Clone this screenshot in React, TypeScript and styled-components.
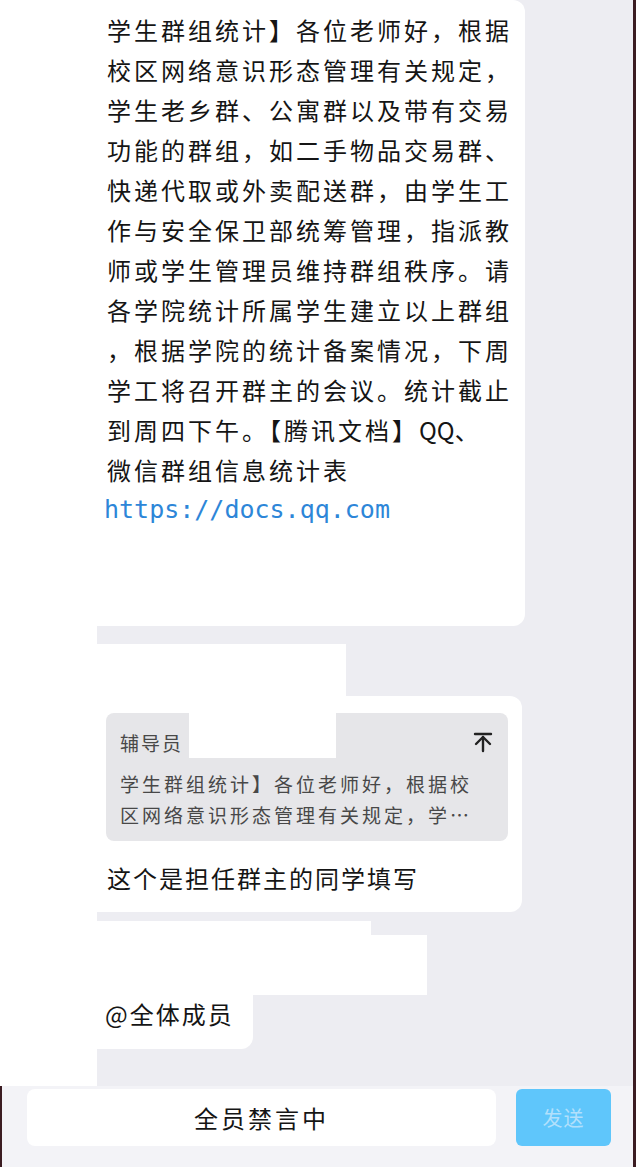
import React from "react";
import styled, { createGlobalStyle } from "styled-components";

const GlobalStyle = createGlobalStyle`
  html, body {
    margin: 0;
    padding: 0;
    background: #ffffff;
  }
  body {
    font-family: "Noto Sans CJK SC", "Noto Sans", sans-serif;
    color: #151515;
  }
`;

const Screen = styled.div`
  width: 636px;
  height: 1167px;
  box-sizing: border-box;
  display: flex;
  flex-direction: column;
  overflow: hidden;
  border-right: 3px solid #3b1c22;
  box-shadow: inset -1px 0 #f7eff1;
`;

// chat area: white avatar gutter + grey timeline
const ChatArea = styled.div`
  flex: 0 0 1086px;
  display: grid;
  grid-template-columns: 97px 1fr;
`;

const Gutter = styled.div`
  background: #ffffff;
`;

const Timeline = styled.div`
  background: #ededf2;
  display: flex;
  flex-direction: column;
  align-items: flex-start;
  overflow: hidden;
`;

const Bubble = styled.div<{ $width: number; $radius?: string }>`
  width: ${({ $width }) => $width}px;
  box-sizing: border-box;
  background: #ffffff;
  border-radius: ${({ $radius }) => $radius || "0 12px 12px 0"};
`;

const LongBubble = styled(Bubble)`
  padding: 10px 10px 96px 10px;
`;

const Line = styled.div`
  font-size: 24px;
  line-height: 40px;
  letter-spacing: 3px;
  white-space: nowrap;
`;

const Latin = styled.span`
  letter-spacing: 0;
`;

const Link = styled.div`
  font-family: "DejaVu Sans Mono", "Liberation Mono", monospace;
  font-size: 25px;
  line-height: 40px;
  color: #2d86d8;
  margin-left: -3px;
  white-space: nowrap;
`;

const Redaction = styled.div<{ $width: number; $height: number; $top?: number }>`
  width: ${({ $width }) => $width}px;
  height: ${({ $height }) => $height}px;
  margin-top: ${({ $top }) => $top || 0}px;
  background: #ffffff;
`;

const ReplyBubble = styled(Bubble)`
  padding: 17px 14px 14px 9px;
`;

const Quote = styled.div`
  position: relative;
  height: 128px;
  box-sizing: border-box;
  padding: 14px 14px 0 14px;
  background: #e6e6e9;
  border-radius: 8px;
  color: #484848;
`;

const QuoteHeader = styled.div`
  height: 30px;
  display: flex;
  align-items: center;
  justify-content: space-between;
  font-size: 19px;
  letter-spacing: 2px;
`;

const HeaderRedaction = styled.div`
  position: absolute;
  left: 83px;
  top: -3px;
  width: 147px;
  height: 48px;
  background: #ffffff;
`;

const QuoteText = styled.div`
  margin-top: 11px;
  font-size: 19px;
  line-height: 31px;
  letter-spacing: 3px;
  white-space: nowrap;
`;

const ReplyText = styled(Line)`
  margin-top: 17px;
  letter-spacing: 2px;
  padding-left: 1px;
`;

const MentionBubble = styled(Bubble)`
  height: 54px;
  padding: 0 0 16px 8px;
  font-size: 24px;
  line-height: 38px;
  letter-spacing: 2px;
`;

// bottom input bar
const BottomBar = styled.div`
  flex: 1;
  display: flex;
  align-items: flex-start;
  gap: 20px;
  padding: 3px 0 0 25px;
  background: #f3f3f7;
  border-left: 2px solid #3b1c22;
`;

const InputBox = styled.div`
  width: 469px;
  height: 57px;
  display: flex;
  align-items: center;
  justify-content: center;
  background: #ffffff;
  border-radius: 8px;
  font-size: 24px;
  letter-spacing: 3px;
`;

const SendButton = styled.div`
  width: 95px;
  height: 57px;
  display: flex;
  align-items: center;
  justify-content: center;
  background: #5fc6fb;
  border-radius: 6px;
  color: #b2e0fb;
  font-size: 20px;
  letter-spacing: 1px;
`;

const JumpIcon = () => (
  <svg width="22" height="22" viewBox="0 0 22 22" fill="none" stroke="#222222" strokeWidth="2.4" strokeLinecap="round" strokeLinejoin="round">
    <line x1="3" y1="3" x2="19" y2="3" />
    <line x1="11" y1="6" x2="11" y2="20" />
    <polyline points="4,13 11,6 18,13" />
  </svg>
);

const noticeLines = [
  "学生群组统计】各位老师好，根据",
  "校区网络意识形态管理有关规定，",
  "学生老乡群、公寓群以及带有交易",
  "功能的群组，如二手物品交易群、",
  "快递代取或外卖配送群，由学生工",
  "作与安全保卫部统筹管理，指派教",
  "师或学生管理员维持群组秩序。请",
  "各学院统计所属学生建立以上群组",
  "，根据学院的统计备案情况，下周",
  "学工将召开群主的会议。统计截止",
];

export default function App() {
  return (
    <>
      <GlobalStyle />
      <Screen>
        <ChatArea>
          <Gutter />
          <Timeline>
            <LongBubble $width={428}>
              {noticeLines.map((l) => (
                <Line key={l}>{l}</Line>
              ))}
              <Line>
                到周四下午。【腾讯文档】<Latin>QQ</Latin>、
              </Line>
              <Line>微信群组信息统计表</Line>
              <Link>https://docs.qq.com</Link>
            </LongBubble>

            <Redaction $width={249} $height={52} $top={18} />
            <ReplyBubble $width={425}>
              <Quote>
                <QuoteHeader>
                  <span>辅导员</span>
                  <JumpIcon />
                </QuoteHeader>
                <HeaderRedaction />
                <QuoteText>
                  学生群组统计】各位老师好，根据校
                  <br />
                  区网络意识形态管理有关规定，学…
                </QuoteText>
              </Quote>
              <ReplyText>这个是担任群主的同学填写</ReplyText>
            </ReplyBubble>

            <Redaction $width={274} $height={14} $top={9} />
            <Redaction $width={330} $height={60} />
            <MentionBubble $width={156} $radius="0 0 12px 0">
              @全体成员
            </MentionBubble>
          </Timeline>
        </ChatArea>
        <BottomBar>
          <InputBox>全员禁言中</InputBox>
          <SendButton>发送</SendButton>
        </BottomBar>
      </Screen>
    </>
  );
}
